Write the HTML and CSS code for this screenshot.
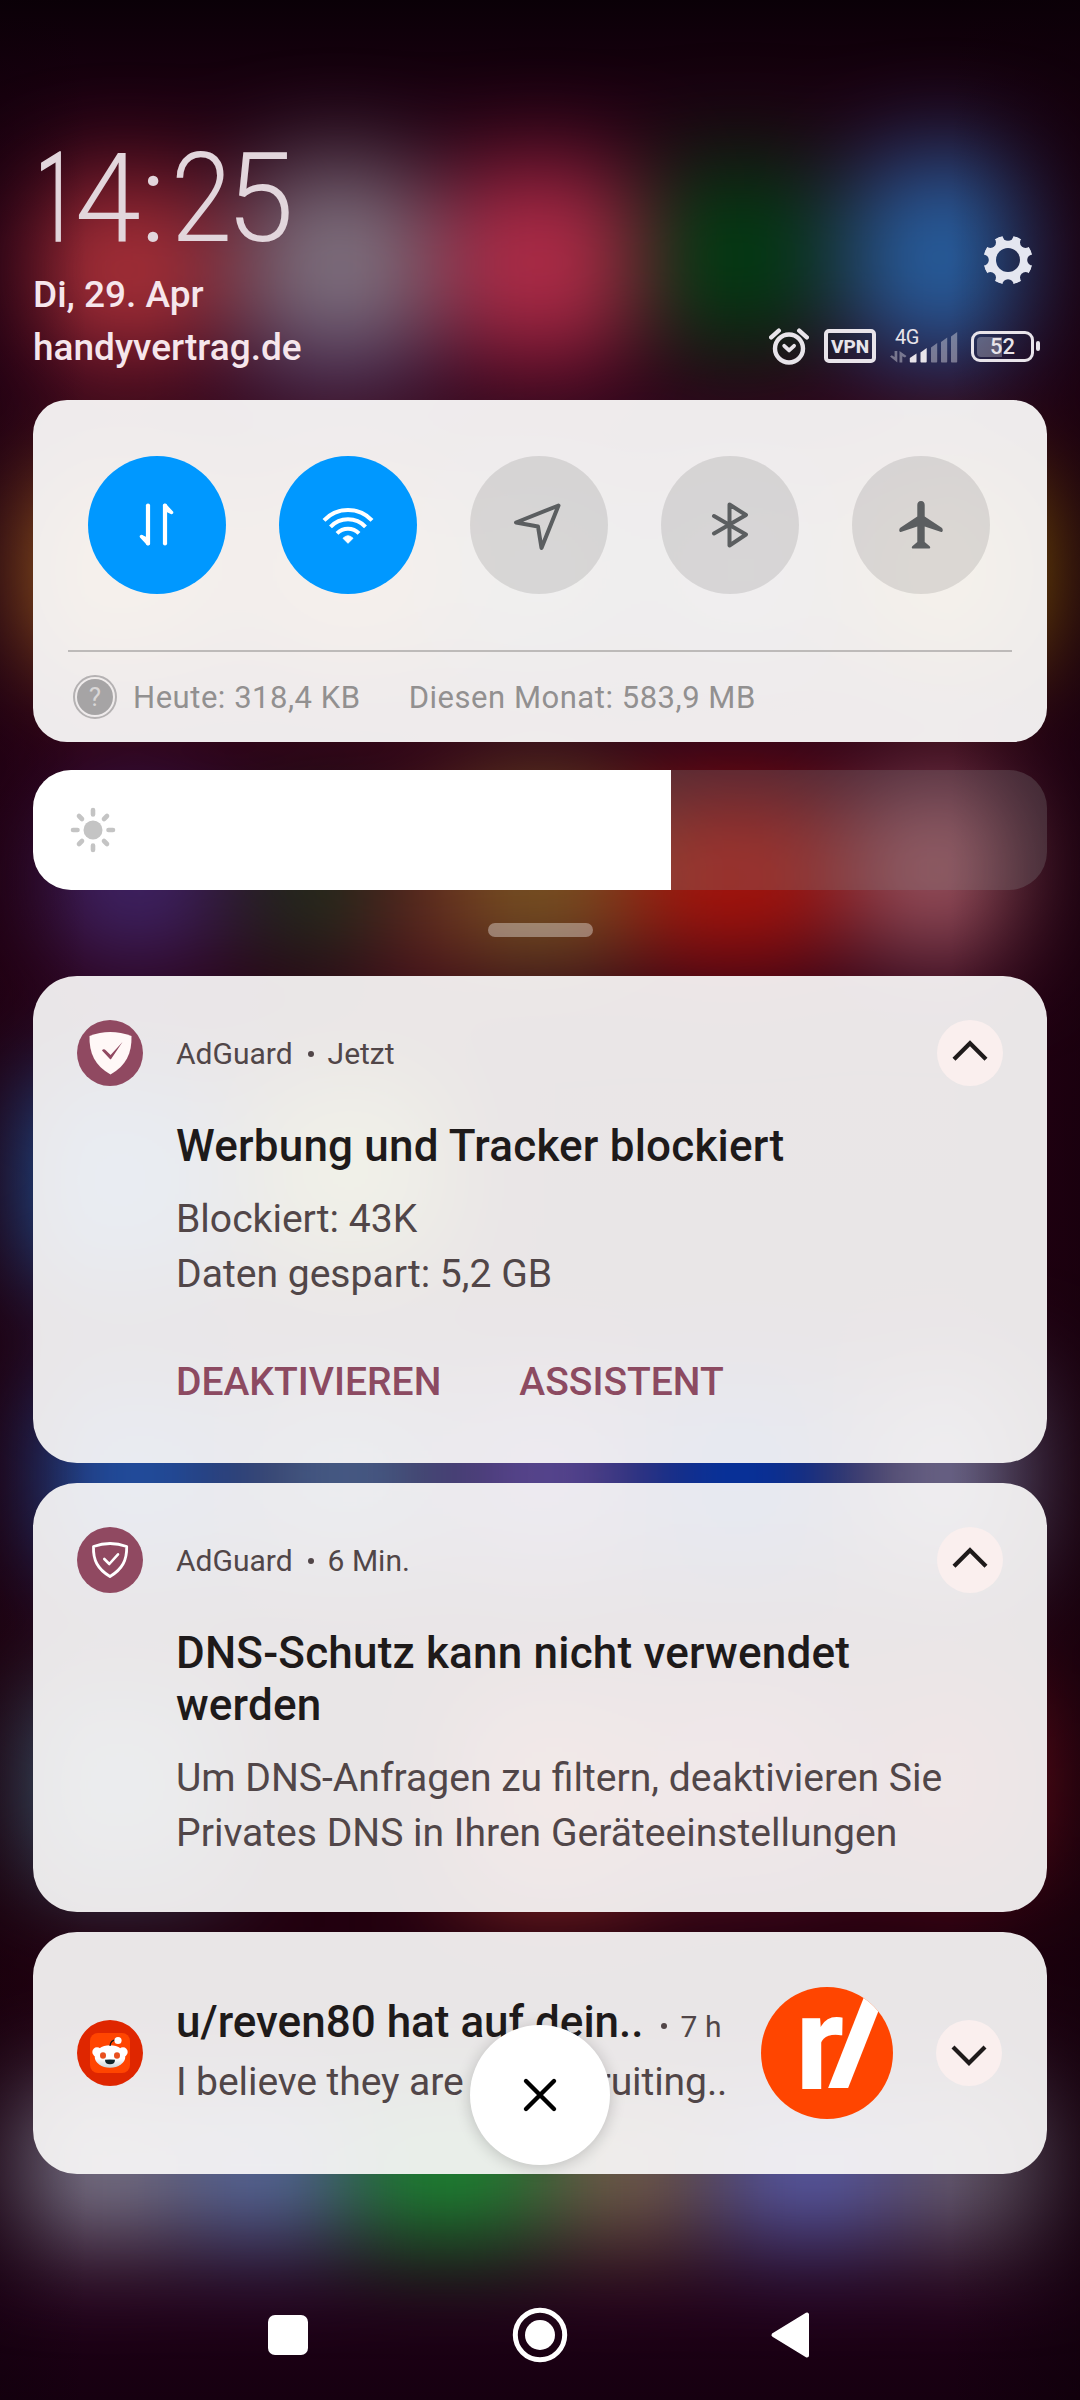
FILE: index.html
```html
<!DOCTYPE html>
<html lang="de">
<head>
<meta charset="utf-8">
<title>Benachrichtigungen</title>
<link rel="stylesheet" href="styles.css">
</head>
<body>
<svg class="wallpaper" viewBox="0 0 1080 2400" aria-hidden="true">
  <defs>
    <linearGradient id="base" x1="0" y1="0" x2="0" y2="1">
      <stop offset="0" stop-color="#0a0007"/>
      <stop offset=".04" stop-color="#1a0010"/>
      <stop offset=".1" stop-color="#2c0018"/>
      <stop offset=".4" stop-color="#2a0016"/>
      <stop offset=".8" stop-color="#22000f"/>
      <stop offset=".96" stop-color="#200018"/>
      <stop offset="1" stop-color="#160010"/>
    </linearGradient>
    <linearGradient id="edge" x1="0" y1="0" x2="1" y2="0">
      <stop offset="0" stop-color="#0c0008" stop-opacity=".3"/>
      <stop offset=".08" stop-color="#0c0008" stop-opacity="0"/>
      <stop offset=".88" stop-color="#0c0008" stop-opacity="0"/>
      <stop offset="1" stop-color="#0c0008" stop-opacity=".5"/>
    </linearGradient>
    <filter id="soft" x="-200" y="-200" width="1480" height="2800" filterUnits="userSpaceOnUse" color-interpolation-filters="sRGB">
      <feGaussianBlur stdDeviation="50"/>
    </filter>
  </defs>
  <rect width="1080" height="2400" fill="url(#base)"/>
  <g filter="url(#soft)">
    <rect x="30" y="180" width="190" height="180" rx="60" fill="#a83038"/>
    <rect x="245" y="165" width="185" height="200" rx="60" fill="#807280"/>
    <rect x="445" y="165" width="190" height="195" rx="60" fill="#b02c48"/>
    <rect x="650" y="160" width="175" height="190" rx="50" fill="#003c12"/>
    <rect x="850" y="155" width="185" height="205" rx="60" fill="#265e9e"/>
    <rect x="240" y="350" width="190" height="60" fill="#3a1844"/>
    <rect x="20" y="480" width="200" height="180" fill="#b06a20"/>
    <rect x="260" y="480" width="180" height="180" fill="#b0601c"/>
    <rect x="460" y="480" width="160" height="180" fill="#505a50"/>
    <rect x="660" y="480" width="160" height="180" fill="#505058"/>
    <rect x="860" y="480" width="200" height="180" fill="#a07000"/>
    <rect x="50" y="800" width="170" height="160" rx="60" fill="#40266c"/>
    <rect x="250" y="810" width="140" height="150" fill="#20301c"/>
    <rect x="380" y="810" width="70" height="190" fill="#601a1e"/>
    <rect x="450" y="780" width="180" height="190" rx="40" fill="#785222"/>
    <rect x="630" y="790" width="210" height="175" rx="60" fill="#a8140c"/>
    <rect x="850" y="780" width="180" height="180" rx="60" fill="#98505c"/>
    <rect x="20" y="1080" width="200" height="200" fill="#2060b0"/>
    <rect x="260" y="1080" width="180" height="180" fill="#8a9a20"/>
    <rect x="40" y="1380" width="190" height="190" fill="#2050a4"/>
    <rect x="255" y="1380" width="180" height="190" fill="#48608c"/>
    <rect x="460" y="1380" width="170" height="190" fill="#5a4a98"/>
    <rect x="650" y="1380" width="180" height="190" fill="#0434a4"/>
    <rect x="860" y="1380" width="180" height="190" fill="#6c688c"/>
    <rect x="20" y="1690" width="200" height="190" fill="#406078"/>
    <rect x="460" y="1690" width="180" height="210" fill="#a03028"/>
    <rect x="660" y="1690" width="170" height="180" fill="#902038"/>
    <rect x="870" y="1690" width="190" height="180" fill="#80101c"/>
    <rect x="10" y="2090" width="170" height="150" fill="#7c788c"/>
    <rect x="190" y="2090" width="150" height="150" fill="#5a70a4"/>
    <rect x="355" y="2090" width="185" height="150" fill="#1c8c34"/>
    <rect x="550" y="2090" width="150" height="150" fill="#786450"/>
    <rect x="720" y="2090" width="170" height="150" fill="#5c60ac"/>
    <rect x="900" y="2090" width="160" height="150" fill="#6c6274"/>
  </g>
  <rect width="1080" height="2400" fill="url(#edge)"/>
</svg>

<div class="shade">
  <header class="status">
    <div class="status-left">
      <div class="clock"><span class="d1">1</span><span class="d4">4</span><span class="colon">:</span><span class="d2">2</span><span class="d5">5</span></div>
      <div class="date">Di, 29. Apr</div>
      <div class="carrier">handyvertrag.de</div>
    </div>
    <div class="status-right">
      <svg class="gear" viewBox="-25 -25 50 50">
        <mask id="teeth">
          <circle r="24.6" fill="#fff"/>
          <g fill="#000">
            <circle r="12"/>
            <circle cx="0" cy="-24.8" r="5.6"/><circle cx="0" cy="24.8" r="5.6"/>
            <circle cx="-24.8" cy="0" r="5.6"/><circle cx="24.8" cy="0" r="5.6"/>
            <circle cx="17.6" cy="17.6" r="5.6"/><circle cx="-17.6" cy="17.6" r="5.6"/>
            <circle cx="17.6" cy="-17.6" r="5.6"/><circle cx="-17.6" cy="-17.6" r="5.6"/>
          </g>
        </mask>
        <circle r="25" fill="#e4e6f0" mask="url(#teeth)"/>
      </svg>
      <div class="indicators">
        <svg class="alarm" viewBox="0 0 40 38" fill="none" stroke="#e8e4ea" stroke-width="4.4" stroke-linecap="round" stroke-linejoin="round">
          <circle cx="20" cy="21.5" r="14"/>
          <path d="M2.2 10.3l7.6-6.6M37.8 10.3l-7.600-6.6"/>
          <path d="M15.2 18.8l4.9 4.6 5-4.600" stroke-width="3.8"/>
        </svg>
        <span class="vpn">VPN</span>
        <div class="signal">
          <span class="net">4G</span>
          <svg viewBox="0 0 68 34">
            <g fill="#e8e4ea" fill-opacity=".42">
              <path d="M7.300 22v11.500L0 27.500l1.800-1.200 2.800 1.700V22z"/>
              <path d="M9.500 33.500V22l7 5-1.500 1.500-2.700-1.200v6.200z"/>
              <path d="M41 18.500l6.200-4.500v18.700q0 .8-.8.8h-4.600q-.8 0-.8-.8z"/>
              <path d="M51 13l6.200-4.500v24.200q0 .8-.8.8h-4.600q-.8 0-.8-.8z"/>
              <path d="M61 7.500L67.200 3v29.700q0 .8-.8.8h-4.600q-.8 0-.8-.8z"/>
            </g>
            <g fill="#e8e4ea">
              <path d="M19.800 29l6.700-4.500v8.200q0 .8-.8.8h-5.100q-.8 0-.8-.8z"/>
              <path d="M30.500 23.500l6.200-4.500v13.700q0 .8-.8.8h-4.600q-.8 0-.8-.8z"/>
            </g>
          </svg>
        </div>
        <div class="battery"><span class="cell"><span class="level" style="width:25px"></span><span class="pct">52</span></span><span class="nub"></span></div>
      </div>
    </div>
  </header>

  <section class="card quick">
    <div class="toggles">
      <span class="toggle on">
        <svg viewBox="0 0 138 138" fill="#fff" stroke="#fff" stroke-width="4.200" stroke-linecap="round" stroke-linejoin="round">
          <path d="M60 49.500v38" fill="none"/><path d="M77 87.500v-38" fill="none"/>
          <path d="M53.500 80.500l5 2.500 1.500 4.500zM83.500 56.500l-5-2.500-1.500-4.500z" stroke-width="3.500"/>
        </svg>
      </span>
      <span class="toggle on">
        <svg viewBox="0 0 138 138" fill="none" stroke="#fff" stroke-width="4">
          <path d="M45 64.300a33 33 0 0 1 48 0M51.500 70.800a24 24 0 0 1 35 0M58 77.300a15.500 15.500 0 0 1 22 0"/>
          <path d="M64 82.300q5-5 10 0l-5 5z" fill="#fff" stroke-width="1"/>
        </svg>
      </span>
      <span class="toggle">
        <svg viewBox="0 0 138 138" fill="none" stroke="#5b5e60" stroke-width="4" stroke-linejoin="round">
          <path d="M88.500 49.500L46 66.500l22 4 3.500 21.500z"/>
        </svg>
      </span>
      <span class="toggle">
        <svg viewBox="0 0 138 138" fill="none" stroke="#5b5e60" stroke-width="4" stroke-linejoin="round" stroke-linecap="round">
          <path d="M53 60l32 18.500-16.500 11V48.500L85 59 53 77.500"/>
        </svg>
      </span>
      <span class="toggle">
        <svg viewBox="0 0 138 138" fill="#5b5e60">
          <path d="M69 45c2.600 0 3.700 2 3.700 4v11.500l17 11.300c1.500 1.200 1.500 4.200-.5 4.200l-16.500-5.500v15.500l5 4.200c1 1.300.4 2.300-.7 2.300H61c-1.100 0-1.700-1-.7-2.300l5-4.200V70.500L48.800 76c-2 0-2-3-.5-4.200l17-11.300V49c0-2 1.100-4 3.700-4z"/>
        </svg>
      </span>
    </div>
    <div class="usage">
      <span class="help"><span class="help-dot">?</span></span>
      <span class="today">Heute: 318,4 KB</span>
      <span class="month">Diesen Monat: 583,9 MB</span>
    </div>
  </section>

  <div class="brightness">
    <div class="brightness-fill" style="width:638px">
      <svg viewBox="-24 -24 48 48" stroke="#c4c4c4" stroke-width="4.600" stroke-linecap="round">
        <circle r="9.500" fill="#c4c4c4" stroke="none"/>
        <path d="M0-20v4.500M0 20v-4.500M-20 0h4.500M20 0h-4.500M-14-14l3 3M14 14l-3-3M-14 14l3-3M14-14l-3 3"/>
      </svg>
    </div>
  </div>
  <div class="handle"></div>

  <article class="card note note-blocked">
    <div class="note-head">
      <svg class="app" viewBox="0 0 66 66">
        <circle cx="33" cy="33" r="33" fill="#904961"/>
        <path d="M12.500 16Q33 8 54.500 16C55 33 49 46 33.500 54.500 18 46 12 33 12.500 16z" fill="#fff8f7"/>
        <path d="M25 30.500q1.500-2.500 4 0l4.600 4.500L45.500 22 34.300 38.800q-.8 1-1.600 0z" fill="#904961"/>
      </svg>
      <span class="meta">AdGuard<i class="dot"></i>Jetzt</span>
      <svg class="chevron" viewBox="0 0 66 66"><circle cx="33" cy="33" r="33" fill="#faefee"/><path d="M17 39.200L33 23.200l16 16" fill="none" stroke="#1e1a1a" stroke-width="4.200"/></svg>
    </div>
    <div class="note-text">
      <h2>Werbung und Tracker blockiert</h2>
      <p>Blockiert: 43K<br>Daten gespart: 5,2 GB</p>
      <div class="actions"><span>DEAKTIVIEREN</span><span>ASSISTENT</span></div>
    </div>
  </article>

  <article class="card note note-dns">
    <div class="note-head">
      <svg class="app" viewBox="0 0 66 66" fill="none" stroke="#fff" stroke-linejoin="round" stroke-linecap="round">
        <circle cx="33" cy="33" r="33" fill="#904961" stroke="none"/>
        <path d="M16.500 19.500Q33 13.500 49.700 19.500C50 33 45.500 42 33 49.500 20.500 42 16 33 16.500 19.500z" stroke-width="2.800"/>
        <path d="M27.300 32l5 5 8.700-9.700" stroke-width="2.600"/>
      </svg>
      <span class="meta">AdGuard<i class="dot"></i>6 Min.</span>
      <svg class="chevron" viewBox="0 0 66 66"><circle cx="33" cy="33" r="33" fill="#faefee"/><path d="M17 39.200L33 23.200l16 16" fill="none" stroke="#1e1a1a" stroke-width="4.200"/></svg>
    </div>
    <div class="note-text">
      <h2>DNS-Schutz kann nicht verwendet<br>werden</h2>
      <p>Um DNS-Anfragen zu filtern, deaktivieren Sie<br>Privates DNS in Ihren Geräteeinstellungen</p>
    </div>
  </article>

  <article class="card note note-reddit">
    <svg class="app" viewBox="0 0 66 66">
      <defs><linearGradient id="face" x1="0" y1="0" x2="0" y2="1"><stop offset=".6" stop-color="#fff"/><stop offset="1" stop-color="#c9d3da"/></linearGradient></defs>
      <circle cx="33" cy="33" r="33" fill="#df2600"/>
      <rect x="13" y="13" width="40" height="40" rx="8" fill="#ff4500"/>
      <circle cx="20" cy="32" r="4.700" fill="#fff"/><circle cx="46" cy="32" r="4.700" fill="#fff"/>
      <ellipse cx="33" cy="36.500" rx="15.300" ry="11.300" fill="url(#face)"/>
      <path d="M33 26q.5-6 6-6.200" fill="none" stroke="#1a1a1a" stroke-width="1.300"/>
      <circle cx="41" cy="20.500" r="3.600" fill="#fff"/>
      <ellipse cx="26" cy="35.500" rx="3" ry="3.300" fill="#e8501e"/><ellipse cx="40" cy="35.500" rx="3" ry="3.300" fill="#e8501e"/>
      <path d="M28 39.800q5-.8 10 0 0 4.500-5 4.500t-5-4.500z" fill="#10252c"/>
    </svg>
    <div class="note-line">
      <div class="line-top"><h2>u/reven80 hat auf dein..</h2><i class="dot"></i><span class="age">7 h</span></div>
      <p>I believe they are still recruiting..</p>
    </div>
    <div class="sub"><span class="sub-r">r</span><span class="sub-slash"></span></div>
    <svg class="chevron" viewBox="0 0 66 66"><circle cx="33" cy="33" r="33" fill="#faefee"/><path d="M17 27L33 43l16-16" fill="none" stroke="#1e1a1a" stroke-width="4.200"/></svg>
  </article>
  <button class="clear" type="button" aria-label="Alle löschen">
    <svg viewBox="0 0 36 36" stroke="#000" stroke-width="4.400" stroke-linecap="round"><path d="M4 4l28 28M32 4L4 32"/></svg>
  </button>
</div>

<nav class="navbar">
  <svg viewBox="0 0 60 60"><rect x="10" y="10" width="40" height="40" rx="7" fill="#fff"/></svg>
  <svg viewBox="0 0 60 60"><circle cx="30" cy="30" r="24.700" fill="none" stroke="#fff" stroke-width="5"/><circle cx="30" cy="30" r="15" fill="#fff"/></svg>
  <svg viewBox="0 0 60 60"><path d="M11.500 30L45 9.500v41z" fill="#fff" stroke="#fff" stroke-width="4" stroke-linejoin="round"/></svg>
</nav>
</body>
</html>
```
FILE: styles.css
```css
* { box-sizing: border-box; }
body {
  margin: 0;
  width: 1080px;
  height: 2400px;
  position: relative;
  overflow: hidden;
  background: #1c0010;
  font-family: Roboto, sans-serif;
  display: flex;
  flex-direction: column;
}
svg { display: block; flex: none; }
h2, p { margin: 0; }

.wallpaper { position: absolute; inset: 0; width: 1080px; height: 2400px; }

.shade {
  position: relative;
  height: 2270px;
  padding: 0 33px;
  display: flex;
  flex-direction: column;
}

/* status header */
.status {
  height: 400px;
  display: flex;
  justify-content: space-between;
}
.status-left { padding-top: 149px; color: #f6e6ec; font-weight: 500; font-size: 37px; line-height: 53px; }
.clock {
  height: 100px;
  margin: 0 0 19px 0;
  font-size: 125px;
  line-height: 100px;
  font-weight: 300;
  color: #e2d6dc;
  display: flex;
}
/* condensed figures, each scaled from its own left edge */
.clock span { display: block; flex: none; transform-origin: 0 50%; }
.clock .d1 { width: 40px; margin-left: 2px; transform: scaleX(.6); -webkit-text-stroke: 1.5px #e2d6dc; }
.d4 { width: 65px; transform: scaleX(.95); }
.colon { width: 31px; }
.d2 { width: 55px; transform: scaleX(.88); }
.d5 { width: 66px; transform: scaleX(.98); }

.status-right { display: flex; flex-direction: column; align-items: flex-end; padding-top: 235px; }
.gear { width: 50px; height: 50px; margin-right: 14px; }
.indicators { display: flex; align-items: center; height: 38px; margin: 42px 7px 0 0; color: #e8e4ea; }
.alarm { width: 40px; height: 38px; margin-right: 15px; }
.vpn {
  width: 52px;
  height: 34px;
  border: 4px solid #e8e4ea;
  border-radius: 5px;
  font-size: 19px;
  font-weight: 800;
  line-height: 27px;
  text-align: center;
  margin-right: 14px;
}
.signal { width: 68px; height: 34px; margin-right: 13px; position: relative; }
.signal svg { width: 68px; height: 34px; }
.net { position: absolute; left: 5px; top: -2px; font-size: 20px; line-height: 20px; letter-spacing: -.5px; }
.battery { display: flex; align-items: center; gap: 2px; }
.cell {
  width: 63px;
  height: 31px;
  border: 3.500px solid #e8e4ea;
  border-radius: 9px;
  padding: 3px;
  display: grid;
}
.level { grid-area: 1 / 1; background: rgba(232, 228, 234, .3); border-radius: 4px 0 0 4px; }
.pct { grid-area: 1 / 1; font-size: 22px; line-height: 20px; font-weight: 500; text-align: center; }
.nub { width: 4px; height: 10px; border-radius: 2px; background: #e8e4ea; }

/* cards */
.card { background: rgba(249, 247, 248, .93); border-radius: 44px; flex: none; }

.quick { height: 342px; border-radius: 34px; padding: 56px 35px 0; background: rgba(250, 249, 249, .945); }
.toggles { display: flex; justify-content: space-between; padding: 0 22px 56px 20px; border-bottom: 2px solid #bdbab9; }
.toggle { width: 138px; height: 138px; border-radius: 50%; background: rgba(0, 0, 0, .1); }
.toggle.on { background: #0098ff; }
.usage { display: flex; align-items: center; height: 90px; padding-left: 5px; font-size: 31px; letter-spacing: .53px; color: #929090; }
.help { width: 44px; height: 44px; border-radius: 50%; border: 2px solid #b5b2b3; padding: 2px; margin-right: 16px; }
.help-dot { display: block; width: 36px; height: 36px; border-radius: 50%; background: #a6a4a5; color: #d9d7d7; font-size: 26px; line-height: 37px; letter-spacing: 0; text-align: center; }
.today { margin-right: 48px; }

.brightness { height: 120px; margin-top: 28px; border-radius: 38px; overflow: hidden; background: rgba(135, 135, 135, .27); flex: none; }
.brightness-fill { height: 120px; background: #fff; display: flex; align-items: center; padding-left: 36px; }
.brightness-fill svg { width: 48px; height: 48px; }
.handle { width: 105px; height: 14px; margin: 33px auto 39px; border-radius: 7px; background: rgba(255, 255, 255, .36); flex: none; }

.note { padding: 44px; }
.note-blocked { height: 487px; }
.note-dns { height: 429px; margin-top: 20px; }
.note-head { display: flex; align-items: center; height: 66px; }
.app, .chevron { width: 66px; height: 66px; }
.meta { margin-left: 33px; padding-top: 1px; flex: 1; font-size: 30px; line-height: 40px; color: #514648; display: flex; align-items: center; }
.dot { width: 6px; height: 6px; border-radius: 50%; background: #514648; margin: 0 14px 0 15px; }
.note-text { padding: 34px 0 0 99px; }
h2 { font-size: 44px; line-height: 52px; letter-spacing: .2px; font-weight: 500; color: #1e1a1a; white-space: nowrap; }
.note p { font-size: 39.100px; line-height: 55px; color: #514648; white-space: nowrap; }
.note-text p { margin-top: 20px; }
.actions { display: flex; gap: 78px; margin-top: 55px; font-size: 39px; line-height: 50px; font-weight: 500; color: #8c4a61; }

.note-reddit { height: 242px; margin-top: 20px; display: flex; align-items: center; }
.note-line { margin-left: 33px; width: 585px; }
.line-top { display: flex; align-items: center; height: 52px; margin-bottom: 7px; }
.line-top h2 { letter-spacing: 0; }
.line-top .dot { margin: 7px 14px 0 17px; }
.age { font-size: 30px; line-height: 40px; margin-top: 9px; color: #514648; }
.note-line p { letter-spacing: -.1px; }

.sub { width: 132px; height: 132px; border-radius: 50%; background: #ff4500; overflow: hidden; position: relative; margin-right: 43px; flex: none; }
.sub-r { position: absolute; left: 34px; top: 12px; font-size: 134px; line-height: 90px; font-weight: 700; color: #fff; }
.sub-slash { position: absolute; left: 89px; top: -10px; width: 20px; height: 111px; background: #fff; transform: skewX(-21.500deg); }

.clear {
  position: absolute;
  left: 470px;
  top: 2025px;
  width: 140px;
  height: 140px;
  border: 0;
  border-radius: 50%;
  background: #fff;
  box-shadow: 0 2px 16px rgba(0, 0, 0, .2);
  display: flex;
  align-items: center;
  justify-content: center;
}
.clear svg { width: 36px; height: 36px; }

.navbar { position: relative; height: 130px; display: flex; justify-content: center; align-items: center; gap: 192px; }
.navbar svg { width: 60px; height: 60px; }
```
